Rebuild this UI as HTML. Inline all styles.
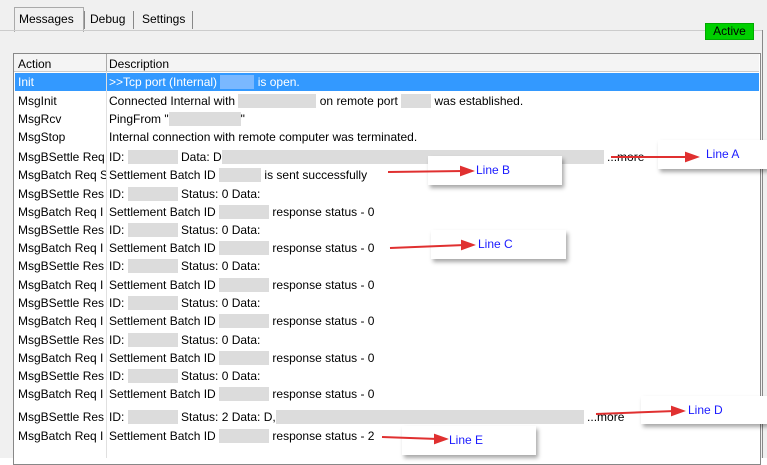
<!DOCTYPE html><html><head><style>
body{margin:0;width:767px;height:458px;background:#fff;position:relative;overflow:hidden;font-family:"Liberation Sans",sans-serif;font-size:12px;color:#000}
.a{position:absolute}
.r{position:absolute;left:15px;width:744px;height:18px;line-height:18px;white-space:nowrap}
.r span.c1{position:absolute;left:3px;width:88px;overflow:hidden}
.r span.c2{position:absolute;left:94px}
.b{display:inline-block;background:#dcdcdc;height:14px;vertical-align:-3px}
.box{position:absolute;background:#fff;box-shadow:2px 3px 4px rgba(0,0,0,.35);color:#1a1aff;font-size:12px}
</style></head><body>
<div class="a" style="left:0;top:0;width:767px;height:458px;background:#f0f0f0"></div>
<div class="a" style="left:10;top:0"></div>
<!-- tabs -->
<div class="a" style="left:14px;top:7px;width:68px;height:24px;background:#f0f0f0;border:1px solid #aaa;border-bottom:none;"></div>
<div class="a" style="left:19px;top:12px;">Messages</div>
<div class="a" style="left:84px;top:11px;width:1px;height:18px;background:#888"></div>
<div class="a" style="left:90px;top:12px;">Debug</div>
<div class="a" style="left:133px;top:11px;width:1px;height:18px;background:#888"></div>
<div class="a" style="left:142px;top:12px;">Settings</div>
<div class="a" style="left:192px;top:11px;width:1px;height:18px;background:#888"></div>
<div class="a" style="left:0;top:30px;width:762px;height:1px;background:#ccc"></div>
<div class="a" style="left:705px;top:23px;width:47px;height:15px;background:#00d000;border:1px solid #0a0;text-align:center;line-height:15px;">Active</div>
<div class="a" style="left:762px;top:30px;width:1px;height:428px;background:#888"></div>
<!-- list -->
<div class="a" style="left:13px;top:53px;width:746px;height:410px;background:#fff;border:1px solid #888"></div>
<div class="a" style="left:14px;top:54px;width:745px;height:17px;background:#f4f4f4;border-bottom:1px solid #ccc"></div>
<div class="a" style="left:18px;top:57px">Action</div>
<div class="a" style="left:106px;top:54px;width:1px;height:17px;background:#aaa"></div>
<div class="a" style="left:109px;top:57px">Description</div>
<div class="r" style="top:73px;background:#3399ff;color:#fff"><span class="c1">Init</span><span class="c2">&gt;&gt;Tcp port (Internal) <span class="b" style="width:34px;background:#7ab8ff"></span> is open.</span></div>
<div class="r" style="top:92px"><span class="c1">MsgInit</span><span class="c2">Connected Internal with <span class="b" style="width:78px"></span> on remote port <span class="b" style="width:30px"></span> was established.</span></div>
<div class="r" style="top:110px"><span class="c1">MsgRcv</span><span class="c2">PingFrom "<span class="b" style="width:72px"></span>"</span></div>
<div class="r" style="top:128px"><span class="c1">MsgStop</span><span class="c2">Internal connection with remote computer was terminated.</span></div>
<div class="r" style="top:148px"><span class="c1">MsgBSettle Req</span><span class="c2">ID: <span class="b" style="width:50px"></span> Data: D<span class="b" style="width:382px"></span> ...more</span></div>
<div class="r" style="top:166px"><span class="c1">MsgBatch Req S</span><span class="c2">Settlement Batch ID <span class="b" style="width:42px"></span> is sent successfully</span></div>
<div class="r" style="top:185px"><span class="c1">MsgBSettle Res</span><span class="c2">ID: <span class="b" style="width:50px"></span> Status: 0 Data:</span></div>
<div class="r" style="top:203px"><span class="c1">MsgBatch Req I</span><span class="c2">Settlement Batch ID <span class="b" style="width:50px"></span> response status - 0</span></div>
<div class="r" style="top:221px"><span class="c1">MsgBSettle Res</span><span class="c2">ID: <span class="b" style="width:50px"></span> Status: 0 Data:</span></div>
<div class="r" style="top:239px"><span class="c1">MsgBatch Req I</span><span class="c2">Settlement Batch ID <span class="b" style="width:50px"></span> response status - 0</span></div>
<div class="r" style="top:257px"><span class="c1">MsgBSettle Res</span><span class="c2">ID: <span class="b" style="width:50px"></span> Status: 0 Data:</span></div>
<div class="r" style="top:276px"><span class="c1">MsgBatch Req I</span><span class="c2">Settlement Batch ID <span class="b" style="width:50px"></span> response status - 0</span></div>
<div class="r" style="top:294px"><span class="c1">MsgBSettle Res</span><span class="c2">ID: <span class="b" style="width:50px"></span> Status: 0 Data:</span></div>
<div class="r" style="top:312px"><span class="c1">MsgBatch Req I</span><span class="c2">Settlement Batch ID <span class="b" style="width:50px"></span> response status - 0</span></div>
<div class="r" style="top:331px"><span class="c1">MsgBSettle Res</span><span class="c2">ID: <span class="b" style="width:50px"></span> Status: 0 Data:</span></div>
<div class="r" style="top:349px"><span class="c1">MsgBatch Req I</span><span class="c2">Settlement Batch ID <span class="b" style="width:50px"></span> response status - 0</span></div>
<div class="r" style="top:367px"><span class="c1">MsgBSettle Res</span><span class="c2">ID: <span class="b" style="width:50px"></span> Status: 0 Data:</span></div>
<div class="r" style="top:385px"><span class="c1">MsgBatch Req I</span><span class="c2">Settlement Batch ID <span class="b" style="width:50px"></span> response status - 0</span></div>
<div class="r" style="top:408px"><span class="c1">MsgBSettle Res</span><span class="c2">ID: <span class="b" style="width:50px"></span> Status: 2 Data: D,<span class="b" style="width:308px"></span> ...more</span></div>
<div class="r" style="top:427px"><span class="c1">MsgBatch Req I</span><span class="c2">Settlement Batch ID <span class="b" style="width:50px"></span> response status - 2</span></div>
<div class="a" style="left:106px;top:72px;width:1px;height:386px;background:#e0e0e0"></div>
<!-- callouts -->
<div class="box" style="left:658px;top:140px;width:109px;height:29px"><span class="a" style="left:48px;top:7px">Line A</span></div>
<div class="box" style="left:428px;top:156px;width:134px;height:29px"><span class="a" style="left:48px;top:7px">Line B</span></div>
<div class="box" style="left:431px;top:230px;width:135px;height:29px"><span class="a" style="left:47px;top:7px">Line C</span></div>
<div class="box" style="left:641px;top:396px;width:126px;height:28px"><span class="a" style="left:47px;top:7px">Line D</span></div>
<div class="box" style="left:402px;top:426px;width:134px;height:29px"><span class="a" style="left:47px;top:7px">Line E</span></div>
<svg class="a" style="left:0;top:0" width="767" height="458">
<g stroke="#e03030" stroke-width="2" fill="#e03030">
<line x1="611" y1="157" x2="690" y2="157"/><polygon points="697,157 686,153 686,161"/>
<line x1="388" y1="172" x2="464" y2="171"/><polygon points="472,171 461,167 461,175"/>
<line x1="390" y1="248" x2="465" y2="245"/><polygon points="473,245 462,241 462,249"/>
<line x1="596" y1="414" x2="675" y2="411"/><polygon points="683,411 672,407 672,415"/>
<line x1="382" y1="437" x2="438" y2="439"/><polygon points="446,439 435,435 435,443"/>
</g></svg>
</body></html>
